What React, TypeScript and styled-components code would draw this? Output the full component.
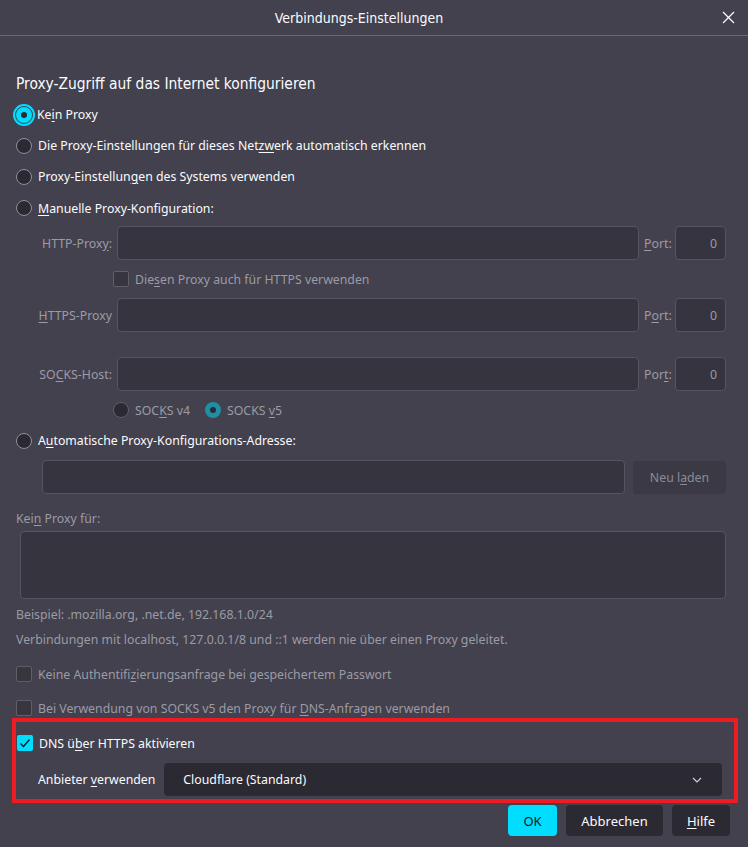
import styled, { createGlobalStyle, css } from "styled-components";

const GlobalStyle = createGlobalStyle`
  html, body {
    margin: 0;
    padding: 0;
    background: #42414d;
  }
`;

const Page = styled.div`
  width: 748px;
  height: 847px;
  overflow: hidden;
  background: #42414d;
  color: #fbfbfe;
  font-family: "Noto Sans", "DejaVu Sans", sans-serif;
  font-size: 12.3px;
  display: flex;
  flex-direction: column;
`;

const TitleBar = styled.header`
  position: relative;
  height: 35px;
  flex: none;
  display: flex;
  align-items: center;
  justify-content: center;
  padding-right: 30px;
  border-bottom: 1px solid #6a6974;
  font-family: "DejaVu Sans Condensed", "DejaVu Sans", sans-serif;
  font-size: 14px;
`;

const CloseButton = styled.button`
  position: absolute;
  right: 12px;
  top: 9px;
  width: 16px;
  height: 16px;
  padding: 0;
  border: none;
  background: none;
  color: #fbfbfe;
  display: flex;
  align-items: center;
  justify-content: center;
`;

const Content = styled.main`
  display: flex;
  flex-direction: column;
  padding: 0 22px 0 16px;
`;

const Heading = styled.h2`
  margin: 38px 0 0 0;
  height: 20px;
  line-height: 20px;
  font-family: "DejaVu Sans Condensed", "DejaVu Sans", sans-serif;
  font-size: 15.4px;
  font-weight: normal;
`;

const Key = styled.u`
  text-decoration: underline;
  text-underline-offset: 2px;
`;

const Row = styled.div<{ $h?: number; $mt?: number; $ml?: number; $muted?: boolean }>`
  display: flex;
  align-items: center;
  gap: 6px;
  height: ${(p) => p.$h ?? 31}px;
  margin-top: ${(p) => p.$mt ?? 0}px;
  margin-left: ${(p) => p.$ml ?? 0}px;
  white-space: nowrap;
  color: ${(p) => (p.$muted ? "#9c9ba5" : "#fbfbfe")};
`;

const Radio = styled.span<{ $checked?: boolean; $disabled?: boolean; $focus?: boolean }>`
  flex: none;
  box-sizing: border-box;
  width: 16px;
  height: 16px;
  border-radius: 50%;
  border: 1px solid ${(p) => (p.$disabled ? "#5f5e69" : "#8f8f9d")};
  background: #2b2a33;
  ${(p) =>
    p.$checked &&
    css`
      border: 5px solid ${p.$disabled ? "#1f8fa3" : "#00ddff"};
      background: #2b2a33;
    `}
  ${(p) =>
    p.$focus &&
    css`
      outline: 2px solid #00ddff;
      outline-offset: 1px;
    `}
`;

const Check = styled.span<{ $checked?: boolean; $disabled?: boolean }>`
  flex: none;
  box-sizing: border-box;
  width: 16px;
  height: 16px;
  border-radius: 2px;
  border: 1px solid ${(p) => (p.$disabled ? "#5f5e69" : "#8f8f9d")};
  background: #37363f;
  display: flex;
  align-items: center;
  justify-content: center;
  ${(p) =>
    p.$checked &&
    css`
      border: none;
      background: #00ddff;
    `}
`;

const ProxyRow = styled.div<{ $mt?: number }>`
  display: grid;
  grid-template-columns: 96px 1fr 26px 51px;
  column-gap: 5px;
  align-items: center;
  height: 34px;
  margin-top: ${(p) => p.$mt ?? 0}px;
  color: #9c9ba5;
`;

const FieldLabel = styled.span`
  text-align: right;
  white-space: nowrap;
`;

const Field = styled.div<{ $h?: number; $align?: string }>`
  box-sizing: border-box;
  height: ${(p) => p.$h ?? 34}px;
  border: 1px solid #56555f;
  border-radius: 4px;
  background: #36343e;
  display: flex;
  align-items: center;
  justify-content: ${(p) => p.$align ?? "flex-start"};
  padding: 0 8px;
  color: #9c9ba5;
`;

const AutoRow = styled.div`
  display: flex;
  gap: 8px;
  height: 34px;
  margin: 4px 0 0 26px;
`;

const GrowField = styled(Field)`
  flex: 1;
`;

const MutedButton = styled.div`
  box-sizing: border-box;
  width: 93px;
  height: 33px;
  margin-top: 1px;
  border-radius: 4px;
  background: #3a3944;
  color: #8c8b95;
  display: flex;
  align-items: center;
  justify-content: center;
`;

const TextArea = styled(Field)`
  margin: 3px 0 0 4px;
`;

const Highlight = styled.section`
  border: 4px solid #ed1c24;
  margin: -1px -12px 0 -4px;
  padding: 0 12px 3px 1px;
  display: flex;
  flex-direction: column;
`;

const SelectRow = styled.div`
  display: flex;
  align-items: center;
  margin: 10px 0 0 21px;
  height: 33px;
  gap: 9px;
`;

const Select = styled.div`
  flex: 1;
  height: 33px;
  border-radius: 4px;
  background: #2b2a33;
  display: flex;
  align-items: center;
  justify-content: space-between;
  padding: 0 20px 0 19px;
`;

const ButtonBar = styled.footer`
  display: flex;
  justify-content: flex-end;
  gap: 9px;
  margin: 2px -4px 0 0;
`;

const Button = styled.button<{ $primary?: boolean; $w: number }>`
  width: ${(p) => p.$w}px;
  height: 31px;
  border: none;
  border-radius: 4px;
  font-family: inherit;
  font-size: 13px;
  background: ${(p) => (p.$primary ? "#00ddff" : "#2b2a33")};
  color: ${(p) => (p.$primary ? "#15141a" : "#fbfbfe")};
`;

const CheckMark = () => (
  <svg width="14" height="14" viewBox="0 0 14 14">
    <path d="M2.5 7.5 L5.5 10.5 L11.5 3.5" fill="none" stroke="#15141a" strokeWidth="1.3" />
  </svg>
);

export default function App() {
  return (
    <Page>
      <GlobalStyle />
      <TitleBar>
        Verbindungs-Einstellungen
        <CloseButton aria-label="Schließen">
          <svg width="13" height="13" viewBox="0 0 13 13">
            <path d="M1 1 L12 12 M12 1 L1 12" stroke="#fbfbfe" strokeWidth="1.3" />
          </svg>
        </CloseButton>
      </TitleBar>
      <Content>
        <Heading>Proxy-Zugriff auf das Internet konfigurieren</Heading>

        <Row $mt={5} $h={31} style={{ gap: 5 }}>
          <Radio $checked $focus />
          <span>
            Ke<Key>i</Key>n Proxy
          </span>
        </Row>
        <Row>
          <Radio />
          <span>
            Die Proxy-Einstellungen für dieses Net<Key>zw</Key>erk automatisch erkennen
          </span>
        </Row>
        <Row>
          <Radio />
          <span>
            Proxy-Einstellun<Key>g</Key>en des Systems verwenden
          </span>
        </Row>
        <Row $mt={1} $h={30}>
          <Radio />
          <span>
            <Key>M</Key>anuelle Proxy-Konfiguration:
          </span>
        </Row>

        <ProxyRow $mt={3}>
          <FieldLabel>
            HTTP-Prox<Key>y</Key>:
          </FieldLabel>
          <Field />
          <span>
            <Key>P</Key>ort:
          </span>
          <Field $align="flex-end">0</Field>
        </ProxyRow>
        <Row $h={38} $ml={97} $muted>
          <Check $disabled />
          <span>
            Die<Key>s</Key>en Proxy auch für HTTPS verwenden
          </span>
        </Row>
        <ProxyRow>
          <FieldLabel>
            <Key>H</Key>TTPS-Proxy
          </FieldLabel>
          <Field />
          <span>
            P<Key>o</Key>rt:
          </span>
          <Field $align="flex-end">0</Field>
        </ProxyRow>
        <ProxyRow $mt={25}>
          <FieldLabel>
            SO<Key>C</Key>KS-Host:
          </FieldLabel>
          <Field />
          <span>
            Por<Key>t</Key>:
          </span>
          <Field $align="flex-end">0</Field>
        </ProxyRow>
        <Row $mt={4} $h={30} $ml={97} $muted>
          <Radio $disabled />
          <span style={{ marginRight: 9 }}>
            SOC<Key>K</Key>S v4
          </span>
          <Radio $checked $disabled />
          <span>
            SOCKS <Key>v</Key>5
          </span>
        </Row>
        <Row $h={31}>
          <Radio />
          <span>
            A<Key>u</Key>tomatische Proxy-Konfigurations-Adresse:
          </span>
        </Row>
        <AutoRow>
          <GrowField />
          <MutedButton>
            Neu l<Key>a</Key>den
          </MutedButton>
        </AutoRow>

        <Row $mt={14} $h={20} $muted>
          <span>
            Kei<Key>n</Key> Proxy für:
          </span>
        </Row>
        <TextArea $h={68} />
        <Row $mt={5} $h={20} $muted>
          Beispiel: .mozilla.org, .net.de, 192.168.1.0/24
        </Row>
        <Row $mt={5} $h={20} $muted>
          Verbindungen mit localhost, 127.0.0.1/8 und ::1 werden nie über einen Proxy geleitet.
        </Row>
        <Row $mt={13} $h={24} $muted>
          <Check $disabled />
          <span>
            Keine Authentifi<Key>z</Key>ierungsanfrage bei gespeichertem Passwort
          </span>
        </Row>
        <Row $mt={11} $h={22} $muted>
          <Check $disabled />
          <span>
            Bei Verwendung von SOCKS v5 den Proxy für <Key>D</Key>NS-Anfragen verwenden
          </span>
        </Row>

        <Highlight>
          <Row $mt={11} $h={20}>
            <Check $checked>
              <CheckMark />
            </Check>
            <span>
              DNS ü<Key>b</Key>er HTTPS aktivieren
            </span>
          </Row>
          <SelectRow>
            <span>
              Anbieter <Key>v</Key>erwenden
            </span>
            <Select>
              <span>Cloudflare (Standard)</span>
              <svg width="10" height="6" viewBox="0 0 10 6">
                <path d="M1 1 L5 5 L9 1" fill="none" stroke="#cfcfd8" strokeWidth="1.2" />
              </svg>
            </Select>
          </SelectRow>
        </Highlight>

        <ButtonBar>
          <Button $primary $w={49}>
            OK
          </Button>
          <Button $w={97}>Abbrechen</Button>
          <Button $w={58}>
            <Key>H</Key>ilfe
          </Button>
        </ButtonBar>
      </Content>
    </Page>
  );
}
